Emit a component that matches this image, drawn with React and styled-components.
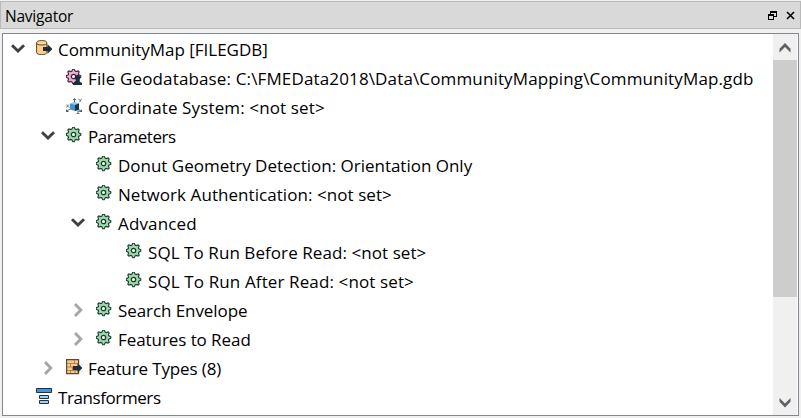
import React from "react";
import styled, { createGlobalStyle } from "styled-components";

const GlobalStyle = createGlobalStyle`
  * { box-sizing: border-box; }
  body { margin: 0; background: #f0f0f0; overflow: hidden; }
`;

const Panel = styled.div`
  width: 801px;
  height: 418px;
  padding: 1px 0 2px;
  display: flex;
  flex-direction: column;
  gap: 4px;
  background: #f0f0f0;
  color: #000;
  font-family: "Open Sans", "Noto Sans", sans-serif;
`;

const TitleBar = styled.header`
  height: 28px;
  flex: none;
  display: flex;
  align-items: center;
  padding: 0 5px 0 4px;
  background: #d9d9d9;
  border: 1px solid #b9b9b9;
`;

const Title = styled.h1`
  flex: 1;
  margin: 0;
  padding-top: 2px;
  font-size: 15.5px;
  line-height: 24px;
  font-weight: 400;
  letter-spacing: -0.22px;
`;

const TitleButtons = styled.div`
  display: flex;
  gap: 9px;
`;

const PlainButton = styled.button`
  display: flex;
  padding: 0;
  border: 0;
  background: none;
`;

const Frame = styled.main`
  flex: 1;
  min-height: 0;
  display: flex;
  margin: 0 2px;
  border: 1px solid #828790;
  background: #fff;
`;

const Tree = styled.ul`
  flex: 1;
  min-width: 0;
  margin: 0;
  padding: 0;
  list-style: none;
`;

const Row = styled.li`
  height: 29px;
  display: flex;
  align-items: center;
  padding-left: ${(p) => p.$level * 30 + 8}px;
`;

const ArrowSlot = styled.span`
  width: 14px;
  flex: none;
  display: flex;
  justify-content: center;
`;

const IconSlot = styled.span`
  width: 16px;
  height: 16px;
  flex: none;
  display: flex;
  margin: 0 6px 2px 11px;
`;

const Label = styled.span`
  padding-top: 2px;
  font-size: 17px;
  line-height: 27px;
  white-space: pre;
  letter-spacing: ${(p) => p.$spacing}px;
`;

const ScrollBar = styled.div`
  width: 24px;
  margin-right: 1px;
  flex: none;
  display: flex;
  flex-direction: column;
  background: #f0f0f0;
`;

const ScrollButton = styled(PlainButton)`
  height: 26px;
  padding-top: 2px;
  align-items: center;
  justify-content: center;
`;

const Track = styled.div`
  flex: 1;
`;

const Thumb = styled.div`
  height: 237px;
  background: #cdcdcd;
`;

const Expanded = () => (
  <svg width="14" height="9" viewBox="0 0 14 9">
    <path d="M1 1.2 7 7 13 1.2" fill="none" stroke="#404040" strokeWidth="2.9" />
  </svg>
);

const Collapsed = () => (
  <svg width="9" height="14" viewBox="0 0 9 14">
    <path d="M1 1 6.8 7 1 13" fill="none" stroke="#a6a6a6" strokeWidth="2.9" />
  </svg>
);

const ScrollArrow = ({ down }) => (
  <svg width="12" height="10" viewBox="0 0 12 10">
    <path
      d={down ? "M.5 0 6 5.6 11.5 0V3.8L6 9.5.5 3.8Z" : "M.5 9.5 6 3.9 11.5 9.5V5.7L6 0 .5 5.7Z"}
      fill="#606060"
    />
  </svg>
);

const gearPath = Array.from({ length: 32 }, (_, i) => {
  const r = i % 4 < 2 ? 7.3 : 5.6;
  const a = ((i - 0.5) * Math.PI) / 16;
  return `${i ? "L" : "M"}${(7.5 + r * Math.sin(a)).toFixed(2)} ${(7.5 - r * Math.cos(a)).toFixed(2)}`;
}).join("") + "Z";

const Gear = ({ fill = "#a0dba5", stroke = "#1b3d34" }) => (
  <>
    <path d={gearPath} fill={fill} stroke={stroke} strokeWidth="1.2" />
    <circle cx="7.5" cy="7.5" r="2.2" fill="#fff" stroke={stroke} strokeWidth="1.3" />
  </>
);

const OutArrow = () => <path d="M7 7h4.5V4.2l5 4.8-5 4.8V11H7Z" fill="#1c2f38" />;

const icons = {
  database: (
    <>
      <path d="M.6 3v9.6c0 2.6 10.2 2.6 10.2 0V3" fill="#fcd08b" stroke="#5d4632" />
      <ellipse cx="5.7" cy="2.8" rx="5.1" ry="2.2" fill="#ffd797" stroke="#5d4632" />
      <OutArrow />
    </>
  ),
  gear: <Gear />,
  source: (
    <>
      <Gear fill="#eab3d0" stroke="#4b2039" />
      <path d="M7 16v-2l2.8-1.4V11a2.6 3 0 1 1 3.6 0v1.6L16 14v2Z" fill="#1c2f38" />
    </>
  ),
  axes: (
    <>
      <path d="M8.5 5V.8M7 2.2 8.5.6 10 2.2M4 11l-3.5 2.5M.5 11.5v2h2M12 11l3.5 2.5M13.5 13.5h2v-2" fill="none" stroke="#34495c" strokeWidth=".9" />
      <path d="m4 5.5 4.5-1.3L13 5.5v6L9 13l-5-1.5Z" fill="#4b90cc" />
      <path d="m4 5.5 4.5-1.3L13 5.5 9 7Z" fill="#9ac9eb" />
      <path d="M9 7l4-1.5v6L9 13Z" fill="#153553" />
      <path d="m.3 6.5 2.6 3m0-3-2.6 3M12.8.8l1.3 1.8M15.5.8l-2 3.5M11 13h2.2L11 15.5h2.5" fill="none" stroke="#45515b" strokeWidth=".8" />
    </>
  ),
  table: (
    <>
      <path d="M.6.6h12v14H.6Z" fill="#fac987" stroke="#5d4632" strokeWidth="1.2" />
      <path d="M1 4.5h11M1 8h11M1 11.5h11M4.5 4.5V8M8.5 1v3.5M6.5 8v3.5M4.5 11.5V14M9 11.5V14" fill="none" stroke="#a97d48" strokeWidth=".9" />
      <OutArrow />
    </>
  ),
  transformer: (
    <>
      <path d="M.5.5h15v4H.5Z" fill="#4f91cd" stroke="#1c3346" />
      <path d="M3.5 7.5h9v3h-9ZM3.5 12.5h9v3h-9Z" fill="#a6cceb" stroke="#1c3346" />
    </>
  ),
};

const rows = [
  { level: 0, arrow: "open", icon: "database", spacing: -0.03, text: "CommunityMap [FILEGDB]" },
  { level: 1, icon: "source", spacing: 0.14, text: "File Geodatabase: C:\\FMEData2018\\Data\\CommunityMapping\\CommunityMap.gdb" },
  { level: 1, icon: "axes", spacing: 0.13, text: "Coordinate System: <not set>" },
  { level: 1, arrow: "open", icon: "gear", spacing: -0.43, text: "Parameters" },
  { level: 2, icon: "gear", spacing: -0.01, text: "Donut Geometry Detection: Orientation Only" },
  { level: 2, icon: "gear", spacing: 0.06, text: "Network Authentication: <not set>" },
  { level: 2, arrow: "open", icon: "gear", spacing: 0.15, text: "Advanced" },
  { level: 3, icon: "gear", spacing: 0.07, text: "SQL To Run Before Read: <not set>" },
  { level: 3, icon: "gear", spacing: 0.12, text: "SQL To Run After Read: <not set>" },
  { level: 2, arrow: "closed", icon: "gear", spacing: -0.08, text: "Search Envelope" },
  { level: 2, arrow: "closed", icon: "gear", spacing: -0.07, text: "Features to Read" },
  { level: 1, arrow: "closed", icon: "table", spacing: -0.12, text: "Feature Types (8)" },
  { level: 0, icon: "transformer", spacing: -0.41, text: "Transformers" },
];

export default function App() {
  return (
    <Panel>
      <GlobalStyle />
      <TitleBar>
        <Title>Navigator</Title>
        <TitleButtons>
          <PlainButton aria-label="Float">
            <svg width="9" height="9" viewBox="0 0 9 9" shapeRendering="crispEdges">
              <path d="M2 0h7v6H6v3H0V3h2ZM3 2v1h3v2h2V2ZM1 5v3h4V5Z" fillRule="evenodd" />
            </svg>
          </PlainButton>
          <PlainButton aria-label="Close">
            <svg width="9" height="9" viewBox="0 0 9 9">
              <path d="m1 1 7 7m0-7L1 8" stroke="#000" strokeWidth="1.6" />
            </svg>
          </PlainButton>
        </TitleButtons>
      </TitleBar>
      <Frame>
        <Tree>
          {rows.map((r) => (
            <Row key={r.text} $level={r.level}>
              <ArrowSlot>
                {r.arrow === "open" && <Expanded />}
                {r.arrow === "closed" && <Collapsed />}
              </ArrowSlot>
              <IconSlot>
                <svg width="16" height="16" viewBox="0 0 16 16">{icons[r.icon]}</svg>
              </IconSlot>
              <Label $spacing={r.spacing}>{r.text}</Label>
            </Row>
          ))}
        </Tree>
        <ScrollBar>
          <ScrollButton aria-label="Scroll up"><ScrollArrow /></ScrollButton>
          <Track><Thumb /></Track>
          <ScrollButton aria-label="Scroll down"><ScrollArrow down /></ScrollButton>
        </ScrollBar>
      </Frame>
    </Panel>
  );
}
